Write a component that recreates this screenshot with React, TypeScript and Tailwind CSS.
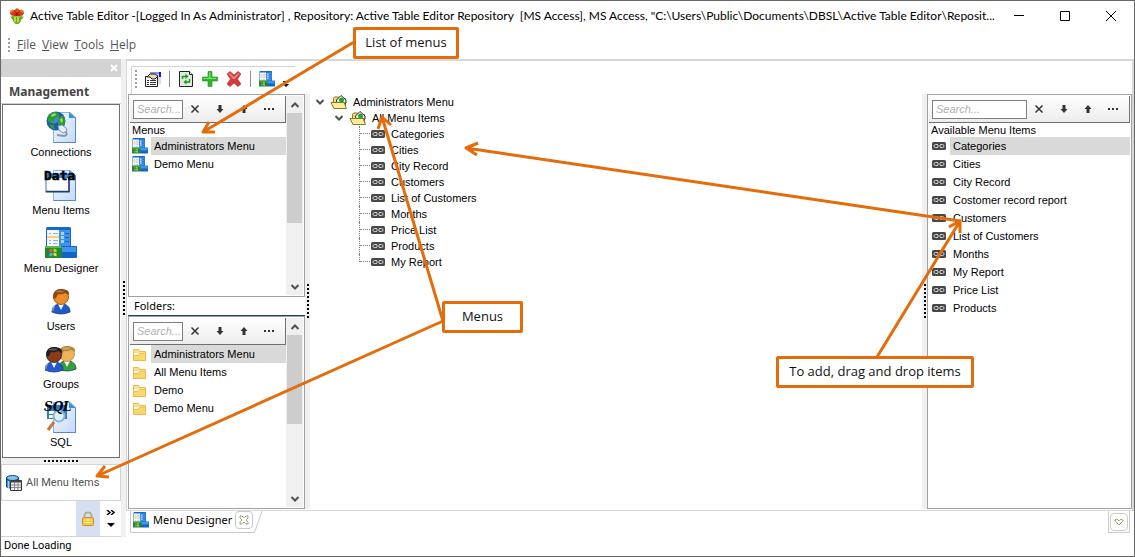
import React from "react";

type IconProps = { className?: string };

function AppLogo() {
  return (
    <svg className="size-4 shrink-0" viewBox="0 0 16 16" aria-hidden="true">
      <path d="M2 7q6 3 12 0l-1.500 3-1 4-2 2h-3l-2-2-1-4z" fill="#6fae1e" />
      <path d="M1 8l3 2 1 2-2-1zM15 8l-3 2-1 2 2-1z" fill="#5b9a18" />
      <path d="M5 9h2v5H5zM8 9h2v5H8z" fill="#b4dd3c" />
      <ellipse cx="8" cy="5" rx="7" ry="3.200" fill="#c92a12" />
      <path d="M1 3l3-2 1 3-3 1zM12 1l3 2-1 2-3-1z" fill="#d98a2c" />
      <circle cx="8" cy="2.200" r="2" fill="#f04822" />
      <circle cx="4.500" cy="5.500" r="2" fill="#e0351a" />
      <circle cx="11.500" cy="5.500" r="2" fill="#e0351a" />
      <circle cx="8" cy="6" r="1.500" fill="#8e1c08" />
    </svg>
  );
}

function PropertiesIcon() {
  return (
    <svg className="size-4" viewBox="0 0 16 16" aria-hidden="true">
      <path d="M6 1h10v12H6z" fill="#dcdcdc" />
      <path d="M5 1h10v2H5z" fill="#7d9cdc" />
      <path d="M14 1h2v5h-2z" fill="#1414e0" />
      <path d="M.500 5.500h12v10H.500z" fill="#fff" stroke="#222" />
      <path d="M2 6l3-3h5l3 2-3 3H7L5 6z" fill="#efd9b4" stroke="#222" />
      <path d="M2 9h2v1H2zM5 9h6v1H5zM2 11h2v1H2zM5 11h6v1H5zM2 13h2v1H2zM5 13h6v1H5z" fill="#333" />
    </svg>
  );
}

function RefreshIcon() {
  return (
    <svg className="size-4" viewBox="0 0 16 16" aria-hidden="true">
      <path d="M1.500.500h10l3 3v12h-13z" fill="#e4e8e4" stroke="#222" />
      <path d="M11.500.500v3h3" fill="#fff" stroke="#222" />
      <path d="M4.500 8V5.500h4" fill="none" stroke="#12a012" strokeWidth="1.500" />
      <path d="M7.500 2.500l3 3-3 2.500z" fill="#12a012" />
      <path d="M11.500 8v3h-4" fill="none" stroke="#12a012" strokeWidth="1.500" />
      <path d="M8.500 8.500v5l-3-2.500z" fill="#12a012" />
    </svg>
  );
}

function PlusIcon() {
  return (
    <svg className="size-4" viewBox="0 0 16 16" aria-hidden="true">
      <path d="M6 .500h4V6h5.500v4H10v5.500H6V10H.500V6H6z" fill="#2fb52c" stroke="#1f8f22" strokeWidth=".6" />
      <path d="M7 1.500h1.500V7H14v1H1.500V7H7z" fill="#7fe070" />
    </svg>
  );
}

function DeleteIcon() {
  return (
    <svg className="size-4" viewBox="0 0 16 16" aria-hidden="true">
      <path d="M1 3l3-2.500L8 4l4-3.500L15 3l-3.500 5 3.500 5-3 2.500L8 12l-4 3.500L1 13l3.500-5z" fill="#d23c3c" stroke="#b02828" strokeWidth=".6" />
      <path d="M2.500 3L4 2l4 4 4-4 1.500 1L9 8H7z" fill="#ee8078" />
    </svg>
  );
}

function DesignerIcon({ className = "size-4" }: IconProps) {
  return (
    <svg className={`${className} shrink-0`} viewBox="0 0 32 32" aria-hidden="true">
      <rect x="1" y="0" width="25" height="21" rx="1.500" fill="#1668cc" />
      <rect x="14" y="3" width="11" height="17" fill="#3f92e6" />
      <rect x="2" y="3" width="12" height="17" fill="#f3f6fb" />
      <path d="M4 6h2v1H4zM8 6h5v1H8zM4 13h2v1H4zM8 13h5v1H8zM4 16h2v1H4zM8 16h4v1H8z" fill="#8fb4e0" />
      <path d="M2 9h12v2H2z" fill="#f7cf78" />
      <path d="M16 5h3v3h-3zM16 9h3v3h-3zM16 13h3v3h-3z" fill="#a4d2fa" />
      <path d="M20 6h4v1h-4zM20 10h4v1h-4zM20 14h4v1h-4z" fill="#1c62b8" />
      <rect x="16" y="19" width="16" height="12" rx="1" fill="#1464c8" />
      <path d="M17 20h14v5H17z" fill="#3e97ea" />
      <path d="M0 19h16q2 6 0 12H0z" fill="#23892c" />
      <path d="M0 19h16l1 2H0z" fill="#5cb852" />
      <path d="M4.500 22.500l3-1v3l-3 1z" fill="#f15b2a" />
      <path d="M8.500 21.500l3 1v3l-3-1z" fill="#a4e234" />
      <path d="M4.500 26.500l3-1v3l-3 1z" fill="#4ab4ff" />
      <path d="M8.500 25.500l3 1v3l-3-1z" fill="#ffd634" />
    </svg>
  );
}

function Page() {
  return (
    <>
      <defs>
        <linearGradient id="page" x1="0" y1="0" x2="1" y2="1">
          <stop offset="0" stopColor="#f6faff" />
          <stop offset="1" stopColor="#c3dafa" />
        </linearGradient>
      </defs>
      <path d="M8.500 1.500h17l5 5v25h-22z" fill="url(#page)" stroke="#8bb0e2" />
      <path d="M24 1v6h6.500z" fill="#2f8fe0" />
      <path d="M8.500 31.500h22v-25" fill="none" stroke="#5c86c4" />
    </>
  );
}

function ConnectionsIcon() {
  return (
    <svg className="size-8" viewBox="0 0 32 32" aria-hidden="true">
      <Page />
      <circle cx="11" cy="10" r="9.500" fill="#1757bc" />
      <circle cx="9" cy="7" r="5.500" fill="#5aa8f0" opacity=".6" />
      <path d="M4 4l5-3 5 1-1 4-4 2-2 4-4-1c-1-3 0-5 1-7zM13 8l4-4 3 4v5l-3 4-4-4zM4 13l5 1 1 5-4-2z" fill="#2f9c2c" />
      <path d="M6 4l4-2 1 2-4 2zM15 8l2-1 1 3-2 2z" fill="#9fe060" />
      <path d="M20 20q4 4-1 5l-7-1" fill="none" stroke="#8396b4" strokeWidth="2" />
      <path d="M13 15l4-1 4 3 1 3-4 2-4-3z" fill="#e6eef8" stroke="#8396b4" />
    </svg>
  );
}

function DataIcon() {
  return (
    <svg className="h-8 w-9" viewBox="-2 0 36 32" aria-hidden="true">
      <Page />
      <rect x="1" y="5" width="23" height="18" fill="#fff" stroke="#4d74a8" />
      <path d="M1 5h23v4H1z" fill="#2c8ce4" />
      <path d="M1 22.500h23V9" fill="none" stroke="#1f3c68" strokeWidth="1.500" />
      <text x="-1" y="11" fontSize="13" stroke="#000" strokeWidth=".5" className="font-['DejaVu_Sans_Mono',monospace] font-bold">Data</text>
    </svg>
  );
}

function SqlIcon() {
  return (
    <svg className="h-8 w-9" viewBox="-2 0 36 32" aria-hidden="true">
      <Page />
      <rect x="2" y="4" width="20" height="14" fill="#2c7cd0" />
      <path d="M4 10h5v3H4zM10 10h5v3h-5zM4 14h5v3H4z" fill="#fff" />
      <path d="M9 21l-6 8" stroke="#c37a45" strokeWidth="3" />
      <circle cx="14" cy="15" r="5.500" fill="#d8f2fc" stroke="#8fb4d0" strokeWidth="2" />
      <path d="M11 14q1-3 4-2" stroke="#fff" strokeWidth="1.500" fill="none" />
      <text x="-1" y="10" fontSize="12" className="font-['DejaVu_Serif',serif] font-bold italic">SQL</text>
    </svg>
  );
}

type PersonProps = { x: number; y: number; skin: string; hair: string; shirt: string };

function Person({ x, y, skin, hair, shirt }: PersonProps) {
  return (
    <g transform={`translate(${x} ${y})`}>
      <path d="M0 23c0-5 3-8 9-8s9 3 9 8q-9 4-18 0z" fill={shirt} stroke="#153a6c" strokeWidth=".8" />
      <path d="M6 15l3 6 3-6z" fill="#f2f6ff" />
      <path d="M2.500 17q-2 3-1.500 5" fill="none" stroke="#fff" strokeOpacity=".4" strokeWidth="1.500" />
      <circle cx="9" cy="8" r="7.500" fill={skin} stroke={hair} strokeWidth=".8" />
      <path d="M1.500 10C0 3 4 0 9 0s9 2 8 6L13 4q-3 2-7 1l-2 4z" fill={hair} />
      <ellipse cx="8" cy="2.500" rx="4" ry="1" fill="#fff" opacity=".25" />
    </g>
  );
}

function UsersIcon() {
  return (
    <svg className="size-8" viewBox="0 0 32 32" aria-hidden="true">
      <Person x={7} y={4} skin="#f08c28" hair="#8a4a12" shirt="#1f58d0" />
    </svg>
  );
}

function GroupsIcon() {
  return (
    <svg className="size-8" viewBox="0 0 32 32" aria-hidden="true">
      <Person x={13} y={3} skin="#efb25c" hair="#b88a38" shirt="#35a034" />
      <Person x={0} y={4} skin="#8c3c14" hair="#20202a" shirt="#2458d0" />
    </svg>
  );
}

function DatabaseIcon() {
  return (
    <svg className="size-4 shrink-0" viewBox="0 0 16 16" aria-hidden="true">
      <path d="M.500 3v9q5 3 12 0V3z" fill="#2b7fd0" stroke="#123c74" />
      <ellipse cx="6.500" cy="3" rx="6" ry="2.500" fill="#7fc4f4" stroke="#123c74" />
      <path d="M2.500 6v7" stroke="#9cd4fa" strokeWidth="1.500" />
      <path d="M4.500 5.500h11v10h-11z" fill="#eee" stroke="#333" />
      <path d="M4.500 6.500h11" stroke="#444" strokeWidth="2" />
      <path d="M8.500 7v8M12 7v8M5 10h10M5 12.500h10" stroke="#888" />
    </svg>
  );
}

function LockIcon() {
  return (
    <svg className="h-4 w-3.5" viewBox="0 0 14 16" aria-hidden="true">
      <path d="M3.500 8V4.500a3.500 3 0 0 1 7 0V8" fill="none" stroke="#b5b09c" strokeWidth="2" />
      <rect x="1.500" y="6.500" width="11" height="8" rx="1" fill="#f3c848" stroke="#c8962a" />
      <path d="M3 9h8M3 11.500h8" stroke="#ffeaa0" />
    </svg>
  );
}

function FolderIcon() {
  return (
    <svg className="size-4 shrink-0" viewBox="0 0 16 16" aria-hidden="true">
      <path d="M1.500 14.500v-11h5l1 2h6v9z" fill="#fbe08a" stroke="#e6bc50" />
      <path d="M2 7h11v2H2z" fill="#fffbe6" />
      <path d="M1.500 14.500v-5H6l1.500-2h6v7z" fill="#f8d76c" stroke="#e6b848" strokeWidth=".8" />
    </svg>
  );
}

function OpenFolderIcon() {
  return (
    <svg className="h-4 w-[18px] shrink-0" viewBox="0 0 18 16" aria-hidden="true">
      <path d="M3.500 14V4.500l1-1.500h4l1 1.500h6V14z" fill="#f2dc78" stroke="#8c7622" />
      <path d="M6.500 6L11 1.500 16 6v3h-9z" fill="#fff" stroke="#222" />
      <circle cx="11.500" cy="6" r="2.500" fill="#22a52e" />
      <path d="M1 8.500h13l2.500 6H4z" fill="#fbeea0" stroke="#8c7622" />
    </svg>
  );
}

function LinkIcon() {
  return (
    <svg className="h-2 w-3.5 shrink-0" viewBox="0 0 14 8" aria-hidden="true">
      <rect width="14" height="8" rx="1.500" fill="#484848" />
      <path d="M6 2.500H3.500a1.500 1.500 0 0 0 0 3H6M8 2.500h2.500a1.500 1.500 0 0 1 0 3H8M5 4h4" fill="none" stroke="#d0d0d0" />
    </svg>
  );
}

function Chevron({ up = false }: { up?: boolean }) {
  return (
    <svg className="h-2 w-2.5" viewBox="0 0 10 8" aria-hidden="true">
      <path d={up ? "M1.500 6L5 2.500 8.500 6" : "M1.500 2L5 5.500 8.500 2"} fill="none" stroke="#505050" strokeWidth="2" />
    </svg>
  );
}

function SearchBar({ label, wide = false }: { label: string; wide?: boolean }) {
  return (
    <div className="flex h-[27px] shrink-0 items-center border-r border-b border-[#707070] bg-linear-to-b from-white to-[#ececec] pr-1 pl-[3px]">
      <input
        aria-label={label}
        placeholder="Search..."
        className={`${wide ? "w-[95px]" : "w-[50px]"} h-[19px] shrink-0 border border-[#808080] bg-white pl-[3px] text-[11px] italic placeholder:text-[#b0b0b0]`}
      />
      <div className="flex flex-1 justify-around text-[#333]">
        <button type="button" aria-label="Clear search" className="flex w-6 justify-center">
          <svg className="size-2.5" viewBox="0 0 10 10"><path d="M1.500 1.500l7 7M8.500 1.500l-7 7" stroke="currentColor" strokeWidth="1.500" /></svg>
        </button>
        <button type="button" aria-label="Find next" className="flex w-6 justify-center">
          <svg className="size-2.5" viewBox="0 0 10 10"><path d="M3.500 1h3v4h2L5 9 1.500 5h2z" fill="currentColor" /></svg>
        </button>
        <button type="button" aria-label="Find previous" className="flex w-6 justify-center">
          <svg className="size-2.5" viewBox="0 0 10 10"><path d="M3.500 9h3V5h2L5 1 1.500 5h2z" fill="currentColor" /></svg>
        </button>
        <button type="button" aria-label="More options" className="flex w-6 justify-center">
          <svg className="size-2.5" viewBox="0 0 10 10"><path d="M0 4h2v2H0zM4 4h2v2H4zM8 4h2v2H8z" fill="currentColor" /></svg>
        </button>
      </div>
    </div>
  );
}

function Scrollbar({ thumb }: { thumb: string }) {
  return (
    <div className="flex w-[17px] shrink-0 flex-col items-center bg-[#f0f0f0]">
      <button type="button" aria-label="Scroll up" className="flex h-[17px] items-center"><Chevron up /></button>
      <div className="flex w-full flex-1 justify-center"><div className={`${thumb} w-[15px] bg-[#cdcdcd]`} /></div>
      <button type="button" aria-label="Scroll down" className="flex h-[17px] items-center"><Chevron /></button>
    </div>
  );
}

type ListProps = { items: string[]; icon: React.ReactNode; indent: string };

function ItemList({ items, icon, indent }: ListProps) {
  return (
    <ul>
      {items.map((item, i) => (
        <li key={item} className={`flex h-[18px] items-center ${indent}`}>
          {icon}
          <span className={`flex h-full flex-1 items-center pl-[3px] whitespace-nowrap ${i === 0 ? "bg-[#d9d9d9]" : ""}`}>{item}</span>
        </li>
      ))}
    </ul>
  );
}

function Splitter() {
  return (
    <div className="flex w-[5px] shrink-0 items-center justify-center bg-[#f0f0f0]">
      <span className="h-[35px] w-0.5 bg-[repeating-linear-gradient(to_bottom,#000_0_2px,transparent_2px_4px)]" />
    </div>
  );
}

function ToolSeparator() {
  return <span className="h-4 w-px bg-[#909090]" />;
}

const management = [
  { label: "Connections", icon: <ConnectionsIcon /> },
  { label: "Menu Items", icon: <DataIcon /> },
  { label: "Menu Designer", icon: <DesignerIcon className="size-8" /> },
  { label: "Users", icon: <UsersIcon /> },
  { label: "Groups", icon: <GroupsIcon /> },
  { label: "SQL", icon: <SqlIcon /> },
];

const folders = ["Administrators Menu", "All Menu Items", "Demo", "Demo Menu"];
const treeLeaves = ["Categories", "Cities", "City Record", "Customers", "List of Customers", "Months", "Price List", "Products", "My Report"];
const available = ["Categories", "Cities", "City Record", "Costomer record report", "Customers", "List of Customers", "Months", "My Report", "Price List", "Products"];

function Sidebar() {
  return (
    <aside className="flex w-[120px] shrink-0 flex-col">
      <div className="flex h-[18px] shrink-0 items-center justify-end bg-[#d3d3d3] pr-[3px]">
        <button type="button" aria-label="Close panel">
          <svg className="size-2" viewBox="0 0 8 8"><path d="M1 1l6 6M7 1L1 7" stroke="#fff" strokeWidth="2" /></svg>
        </button>
      </div>
      <h2 className="flex h-[27px] shrink-0 items-center border-b border-[#d0d0d0] pt-1 pl-2 font-['Noto_Sans',sans-serif] text-[12px] font-bold text-[#444]">Management</h2>
      <nav className="mx-px flex min-h-0 flex-1 flex-col border border-[#707070] pt-[5px]">
        {management.map(({ label, icon }) => (
          <a key={label} href="#" className="flex h-[58px] shrink-0 flex-col items-center">
            <span className="flex h-[34px] items-center">{icon}</span>
            {label}
          </a>
        ))}
      </nav>
      <div className="flex h-[6px] shrink-0 items-center justify-center bg-[#f0f0f0]">
        <span className="h-0.5 w-[35px] bg-[repeating-linear-gradient(to_right,#000_0_2px,transparent_2px_4px)]" />
      </div>
      <a href="#" className="flex h-[37px] shrink-0 items-center gap-1 border border-[#d3d3d3] pl-1 font-['Roboto',sans-serif] text-[11px] whitespace-nowrap text-[#555]">
        <DatabaseIcon />
        All Menu Items
      </a>
      <div className="flex h-[36px] shrink-0 justify-end border-b border-[#d3d3d3]">
        <button type="button" aria-label="Lock" className="flex w-6 items-center justify-center bg-[#d5dff1]"><LockIcon /></button>
        <button type="button" aria-label="More panels" className="flex w-[21px] flex-col items-center justify-center gap-2">
          <svg className="h-[5px] w-2.5" viewBox="0 0 10 5"><path d="M1 0l3 2.500L1 5M5 0l3 2.500L5 5" fill="none" stroke="#000" strokeWidth="1.500" /></svg>
          <svg className="h-1 w-2" viewBox="0 0 8 4"><path d="M0 0h8L4 4z" /></svg>
        </button>
      </div>
    </aside>
  );
}

function Toolbar() {
  return (
    <div className="flex h-[33px] w-[168px] shrink-0 items-end pl-1">
      <div className="flex h-[28px] w-full items-center gap-2 border-t border-l border-[#d3d3d3] pb-1 pl-[3px]">
        <span className="h-[18px] w-0.5 bg-[repeating-linear-gradient(to_bottom,#a0a0a0_0_2px,transparent_2px_4px)]" />
        <button type="button" aria-label="Properties"><PropertiesIcon /></button>
        <ToolSeparator />
        <button type="button" aria-label="Refresh"><RefreshIcon /></button>
        <button type="button" aria-label="Add"><PlusIcon /></button>
        <button type="button" aria-label="Delete"><DeleteIcon /></button>
        <ToolSeparator />
        <button type="button" aria-label="Menu Designer"><DesignerIcon /></button>
        <button type="button" aria-label="Toolbar options" className="pt-3">
          <svg className="h-[7px] w-[6px]" viewBox="0 0 6 7"><path d="M0 0h6v1H0zM0 3h6L3 6z" /></svg>
        </button>
      </div>
    </div>
  );
}

function MenuTree() {
  return (
    <section aria-label="Menu tree" className="min-w-0 flex-1 pl-[5px]">
      <div className="flex h-4 items-center gap-[5px]">
        <Chevron />
        <OpenFolderIcon />
        <span>Administrators Menu</span>
      </div>
      <div className="flex h-4 items-center gap-[5px] pl-[19px]">
        <Chevron />
        <OpenFolderIcon />
        <span>All Menu Items</span>
      </div>
      <ul className="pl-11">
        {treeLeaves.map((leaf, i) => (
          <li key={leaf} className="flex h-4">
            <span className={`${i === treeLeaves.length - 1 ? "h-2" : "h-4"} border-l border-dotted border-[#808080]`} />
            <span className="mr-px h-2 w-2.5 border-b border-dotted border-[#808080]" />
            <span className="flex items-center gap-[6px] whitespace-nowrap"><LinkIcon />{leaf}</span>
          </li>
        ))}
      </ul>
    </section>
  );
}

function Annotations() {
  return (
    <div className="pointer-events-none absolute -inset-px font-['Open_Sans',sans-serif] text-[13px] text-[#111]">
      <svg className="absolute top-0 left-0 h-[557px] w-[1135px]" fill="none" stroke="#e46c0a" strokeWidth="3" strokeLinejoin="round" aria-hidden="true">
        <path d="M354 42L203 132M215 132L203 132L209 122" />
        <path d="M443 321L382 117M378 129L382 117L391 125" />
        <path d="M443 321L97 476M109 477L97 476L105 466" />
        <path d="M960 221L466 148M477 155L466 148L478 143" />
        <path d="M877 357L960 221M949 227L960 221L960 233" />
      </svg>
      <div className="absolute top-[27px] left-[353px] flex h-8 w-[106px] items-center justify-center rounded-xs border-3 border-[#e46c0a] bg-white pb-0.5">List of menus</div>
      <div className="absolute top-[301px] left-[442px] flex h-8 w-[81px] items-center justify-center rounded-xs border-3 border-[#e46c0a] bg-white pb-0.5">Menus</div>
      <div className="absolute top-[356px] left-[776px] flex h-8 w-[198px] items-center justify-center rounded-xs border-3 border-[#e46c0a] bg-white pb-0.5 whitespace-nowrap">To add, drag and drop items</div>
    </div>
  );
}

export default function App() {
  return (
    <div className="relative flex h-screen flex-col overflow-hidden border border-[#666] bg-white font-['Liberation_Sans',Arial,sans-serif] text-[11px] leading-4 text-black">
      <header className="flex h-[29px] shrink-0 items-center pl-2">
        <AppLogo />
        <h1 className="ml-[5px] min-w-0 flex-1 font-['Lato',sans-serif] text-[12px] whitespace-nowrap">
          Active Table Editor -[Logged In As Administrator] , Repository: Active Table Editor Repository&nbsp; [MS Access], MS Access, "C:\Users\Public\Documents\DBSL\Active Table Editor\Reposit...
        </h1>
        <div className="flex shrink-0">
          <button type="button" aria-label="Minimize" className="flex w-[46px] justify-center">
            <svg className="size-2.5" viewBox="0 0 10 10"><path d="M0 4.500h10" stroke="#000" /></svg>
          </button>
          <button type="button" aria-label="Maximize" className="flex w-[46px] justify-center">
            <svg className="size-2.5" viewBox="0 0 10 10"><path d="M.500.500h9v9h-9z" fill="none" stroke="#000" /></svg>
          </button>
          <button type="button" aria-label="Close" className="flex w-[46px] justify-center">
            <svg className="size-2.5" viewBox="0 0 10 10"><path d="M0 0l10 10M10 0L0 10" stroke="#000" /></svg>
          </button>
        </div>
      </header>
      <nav className="flex h-[29px] shrink-0 items-center gap-2 pl-[7px] font-['Open_Sans',sans-serif] text-[12px] text-[#555]">
        <span className="-mr-px h-3.5 w-0.5 bg-[repeating-linear-gradient(to_bottom,#a0a0a0_0_2px,transparent_2px_4px)]" />
        <div className="flex gap-[6px]">
          {["File", "View", "Tools", "Help"].map((m) => (
            <button key={m} type="button"><span className="underline">{m[0]}</span>{m.slice(1)}</button>
          ))}
        </div>
      </nav>

      <div className="flex min-h-0 flex-1">
        <Sidebar />
        <Splitter />
        <main className="flex min-w-0 flex-1 flex-col">
          <div className="flex min-h-0 flex-1 flex-col border-t-2 border-r-2 border-b border-l border-[#d8d8d8] pb-px">
            <Toolbar />
            <div className="flex min-h-0 flex-1 pl-px">
              <div className="flex w-[177px] shrink-0 flex-col">
                <section aria-label="Menus" className="flex h-[203px] shrink-0 border border-[#a0a0a8] p-px">
                  <div className="min-w-0 flex-1">
                    <SearchBar label="Search menus" />
                    <h3 className="pl-0.5 leading-[14px]">Menus</h3>
                    <ItemList items={["Administrators Menu", "Demo Menu"]} icon={<DesignerIcon />} indent="gap-[3px] pl-0.5" />
                  </div>
                  <Scrollbar thumb="h-[110px]" />
                </section>
                <h3 className="flex h-[19px] shrink-0 items-center border-b border-[#1f3a78] pl-[6px] font-['Noto_Sans',sans-serif] text-[11px]">Folders:</h3>
                <section aria-label="Folders" className="flex min-h-0 flex-1 border border-[#a0a0a8] p-px">
                  <div className="min-w-0 flex-1">
                    <SearchBar label="Search folders" />
                    <ItemList items={folders} icon={<FolderIcon />} indent="gap-[3px] pl-0.5" />
                  </div>
                  <Scrollbar thumb="h-[89px]" />
                </section>
              </div>
              <Splitter />
              <MenuTree />
              <Splitter />
              <section aria-label="Available Menu Items" className="w-[205px] shrink-0 border border-[#a0a0a8] p-px">
                <SearchBar label="Search available menu items" wide />
                <h3 className="pl-0.5 leading-[14px]">Available Menu Items</h3>
                <ItemList items={available} icon={<LinkIcon />} indent="gap-1 pl-[3px]" />
              </section>
            </div>
          </div>
          <div className="flex h-[26px] shrink-0 items-start justify-between pr-1 pl-1">
            <div className="relative flex h-[22px] w-[133px] items-center pb-1 pl-[3px]">
              <svg className="absolute inset-0 size-full" viewBox="0 0 133 22" fill="none" stroke="#c8c8c8" aria-hidden="true"><path d="M.500 0v21.500h124L132 0" /></svg>
              <DesignerIcon />
              <span className="ml-1 font-['Noto_Sans',sans-serif] text-[11px] whitespace-nowrap">Menu Designer</span>
              <button type="button" aria-label="Close tab" className="ml-[3px] flex size-[18px] shrink-0 items-center justify-center rounded-sm border border-[#ccc]">
                <svg className="size-2.5" viewBox="0 0 10 10"><path d="M1 1h2l2 2 2-2h2v2L7 5l2 2v2H7L5 7 3 9H1V7l2-2-2-2z" fill="#fff" stroke="#86804c" strokeDasharray="1.500 .5" /></svg>
              </button>
            </div>
            <div className="flex size-[22px] items-center justify-center border border-t-0 border-[#ccc]">
              <button type="button" aria-label="Open windows" className="flex size-[18px] items-center justify-center rounded-sm border border-[#ccc]">
                <svg className="h-2 w-2.5" viewBox="0 0 10 8"><path d="M1 2l2-1 2 2 2-2 2 1v1L5 7 1 3z" fill="#fff" stroke="#86804c" strokeDasharray="1.500 .5" /></svg>
              </button>
            </div>
          </div>
        </main>
      </div>
      <footer className="flex h-[19px] shrink-0 items-center pb-px pl-[3px] font-['Roboto',sans-serif] text-[11px]">Done Loading</footer>
      <Annotations />
    </div>
  );
}
